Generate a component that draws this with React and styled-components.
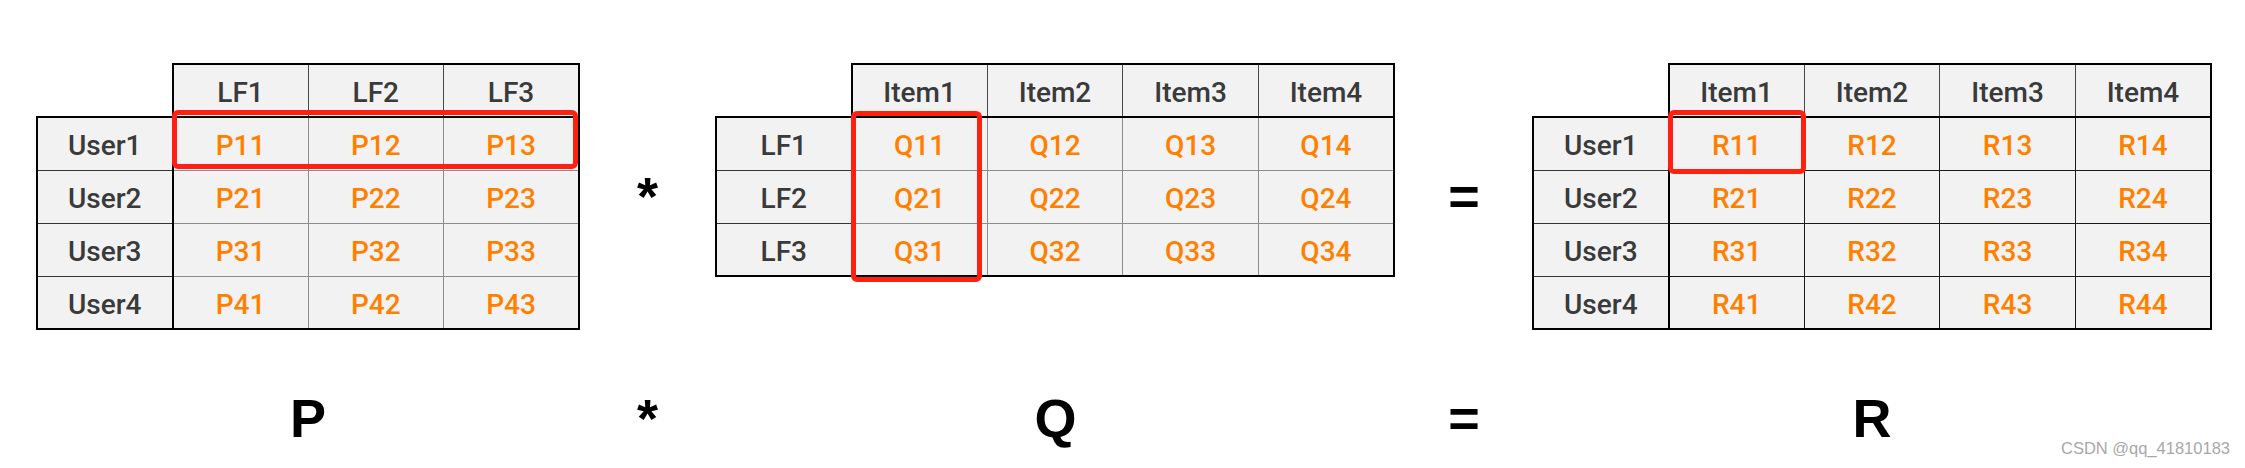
import React from 'react';
import styled, { createGlobalStyle } from 'styled-components';

const GlobalStyle = createGlobalStyle`
  html, body {
    margin: 0;
    padding: 0;
    background: #ffffff;
  }
`;

const Page = styled.div`
  position: relative;
  width: 2245px;
  height: 468px;
  overflow: hidden;
  background: #ffffff;
  font-family: Roboto, 'Liberation Sans', Arial, sans-serif;
`;

const Board = styled.div`
  display: grid;
  grid-template-columns: 544px 135px 681px 136px 680px;
  grid-template-rows: 266px 54px;
  row-gap: 62px;
  padding: 63px 0 0 36px;
`;

const Block = styled.div`
  position: relative;
  align-self: start;
`;

const Matrix = styled.table`
  border-collapse: collapse;
  table-layout: fixed;
  width: ${(p) => p.$cols * 136}px;

  td,
  th {
    box-sizing: border-box;
    height: 53px;
    padding: 5px 0 0;
    font-size: 28px;
    font-weight: 500;
    line-height: 1;
    text-align: center;
    vertical-align: middle;
  }
`;

const Corner = styled.td`
  border: none;
  background: #ffffff;
`;

const HeadCell = styled.th`
  background: #f2f2f2;
  color: #3a3a3a;
  border-top: 2px solid #000;
  border-bottom: 2px solid #000;
  border-left: ${(p) => (p.$first ? '2px solid #000' : '1px solid #4a4a4a')};
  border-right: ${(p) => (p.$last ? '2px solid #000' : '1px solid #4a4a4a')};
`;

const RowHead = styled.th`
  background: #f2f2f2;
  color: #3a3a3a;
  border-left: 2px solid #000;
  border-right: 2px solid #000;
  border-top: ${(p) => (p.$first ? '2px solid #000' : '1px solid #333')};
  border-bottom: ${(p) => (p.$last ? '2px solid #000' : '1px solid #333')};
`;

const Cell = styled.td`
  background: #f2f2f2;
  color: #ff8000;
  border: 1px solid ${(p) => p.$grid};
  border-right: ${(p) => (p.$lastCol ? '2px solid #000' : `1px solid ${p.$grid}`)};
  border-bottom: ${(p) => (p.$lastRow ? '2px solid #000' : `1px solid ${p.$grid}`)};
`;

const Highlight = styled.div`
  position: absolute;
  box-sizing: border-box;
  border: 5px solid #ff2010;
  border-radius: 6px;
  pointer-events: none;
`;

const Operator = styled.div`
  display: flex;
  align-items: center;
  justify-content: center;
  font-family: 'Liberation Sans', Arial, sans-serif;
  font-weight: 700;
  font-size: 54px;
  line-height: 1;
  color: #000;
`;

const Label = styled.div`
  text-align: center;
  font-family: 'Liberation Sans', Arial, sans-serif;
  font-weight: 700;
  font-size: 54px;
  line-height: 1;
  color: #000;
`;

const Watermark = styled.div`
  position: absolute;
  right: 15px;
  bottom: 10px;
  font-family: 'Liberation Sans', Arial, sans-serif;
  font-size: 16.5px;
  color: #a8a8a8;
`;

const MatrixBlock = ({ letter, cols, rows, grid, box }) => (
  <Block>
    <Matrix $cols={cols.length + 1}>
      <tbody>
        <tr>
          <Corner />
          {cols.map((c, j) => (
            <HeadCell key={c} $first={j === 0} $last={j === cols.length - 1}>
              {c}
            </HeadCell>
          ))}
        </tr>
        {rows.map((r, i) => (
          <tr key={r}>
            <RowHead $first={i === 0} $last={i === rows.length - 1}>
              {r}
            </RowHead>
            {cols.map((c, j) => (
              <Cell
                key={c}
                $grid={grid}
                $lastCol={j === cols.length - 1}
                $lastRow={i === rows.length - 1}
              >
                {letter}
                {i + 1}
                {j + 1}
              </Cell>
            ))}
          </tr>
        ))}
      </tbody>
    </Matrix>
    <Highlight style={box} />
  </Block>
);

const users = ['User1', 'User2', 'User3', 'User4'];
const factors = ['LF1', 'LF2', 'LF3'];
const items = ['Item1', 'Item2', 'Item3', 'Item4'];

export default function App() {
  return (
    <>
      <GlobalStyle />
      <Page>
        <Board>
          <MatrixBlock
            letter='P'
            cols={factors}
            rows={users}
            grid='#8c8c8c'
            box={{ left: 136, top: 47, width: 406, height: 59 }}
          />
          <Operator>*</Operator>
          <MatrixBlock
            letter='Q'
            cols={items}
            rows={factors}
            grid='#8c8c8c'
            box={{ left: 136, top: 48, width: 131, height: 171 }}
          />
          <Operator>=</Operator>
          <MatrixBlock
            letter='R'
            cols={items}
            rows={users}
            grid='#1a1a1a'
            box={{ left: 136, top: 47, width: 138, height: 64 }}
          />

          <Label>P</Label>
          <Operator>*</Operator>
          <Label>Q</Label>
          <Operator>=</Operator>
          <Label>R</Label>
        </Board>
        <Watermark>CSDN @qq_41810183</Watermark>
      </Page>
    </>
  );
}
